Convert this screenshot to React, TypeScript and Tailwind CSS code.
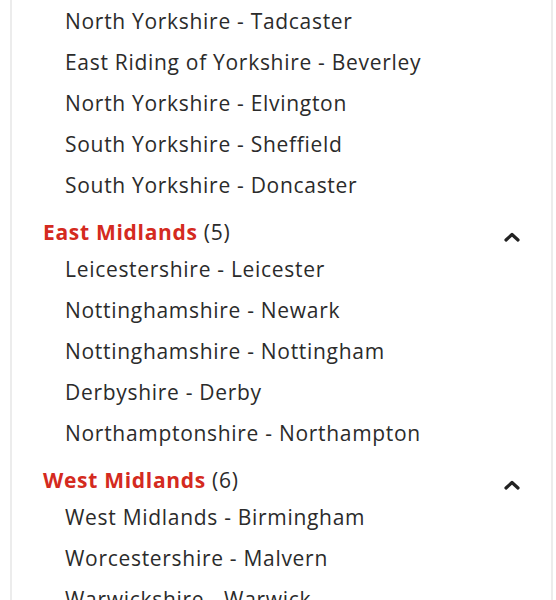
interface Region {
  name: string;
  places: string[];
}

const leading = [
  'North Yorkshire - Tadcaster',
  'East Riding of Yorkshire - Beverley',
  'North Yorkshire - Elvington',
  'South Yorkshire - Sheffield',
  'South Yorkshire - Doncaster',
];

const regions: Region[] = [
  {
    name: 'East Midlands',
    places: [
      'Leicestershire - Leicester',
      'Nottinghamshire - Newark',
      'Nottinghamshire - Nottingham',
      'Derbyshire - Derby',
      'Northamptonshire - Northampton',
    ],
  },
  {
    name: 'West Midlands',
    places: [
      'West Midlands - Birmingham',
      'Worcestershire - Malvern',
      'Warwickshire - Warwick',
      'Staffordshire - Stoke-on-Trent',
      'Shropshire - Shrewsbury',
      'Herefordshire - Hereford',
    ],
  },
];

function Place({ label }: { label: string }) {
  return (
    <li className="flex h-[41px] items-center pl-[53px] text-[21px] tracking-[0.7px] text-[#2b2b2b]">{label}</li>
  );
}

function Caret() {
  return (
    <svg width="16" height="10" viewBox="0 0 16 10" className="mt-[8px] text-[#222]">
      <path d="M2 8 L8 2.5 L14 8" fill="none" stroke="currentColor" strokeWidth="3.2" strokeLinecap="round" strokeLinejoin="round" />
    </svg>
  );
}

export default function App() {
  return (
    <div className="h-[600px] overflow-hidden bg-white" style={{ fontFamily: '"Open Sans", Lato, sans-serif' }}>
      <div className="ml-[10px] mr-[3px] border-x-2 border-[#ececec] pr-[31px] pt-[1px]">
        <ul>
          {leading.map((p) => (
            <Place key={p} label={p} />
          ))}
        </ul>
        {regions.map((r) => (
          <div key={r.name}>
            <div className="flex h-[43px] items-center justify-between pl-[31px] pt-[10px]">
              <span className="text-[21px] tracking-[0.7px]">
                <span className="font-bold text-[#d42a20]">{r.name}</span>{' '}
                <span className="text-[#2b2b2b]">({r.places.length})</span>
              </span>
              <Caret />
            </div>
            <ul>
              {r.places.map((p) => (
                <Place key={p} label={p} />
              ))}
            </ul>
          </div>
        ))}
      </div>
    </div>
  );
}
